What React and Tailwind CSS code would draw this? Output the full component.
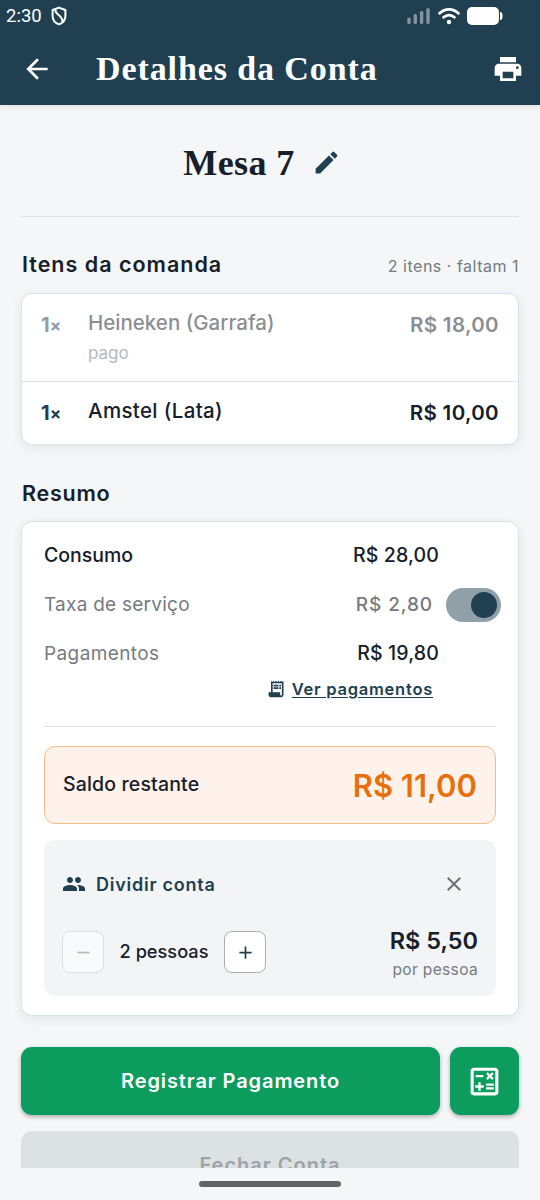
import { useState } from "react";
import {
  MdAdd,
  MdArrowBack,
  MdClose,
  MdEdit,
  MdGroup,
  MdOutlineCalculate,
  MdPrint,
  MdReceiptLong,
  MdRemove,
} from "react-icons/md";

const items = [
  { id: 1, qty: 1, name: "Heineken (Garrafa)", price: "R$ 18,00", paid: true },
  { id: 2, qty: 1, name: "Amstel (Lata)", price: "R$ 10,00", paid: false },
];

function StatusBar() {
  return (
    <div className="flex h-8 items-center pl-[6px] pr-[37px] text-white">
      <span className="font-[Roboto] text-[18.5px] leading-8">2:30</span>
      <svg className="ml-[9px]" width="16" height="20" viewBox="0 0 16 20" fill="none" stroke="currentColor" strokeWidth="2">
        <path d="M8 1.6 14.4 4v6c0 4-2.6 7-6.4 8.4C4.2 17 1.6 14 1.6 10V4z" strokeLinejoin="round" />
        <path d="M4.2 3.2C4 9.5 12 8.5 11.4 16" />
      </svg>
      <svg className="ml-auto" width="24" height="18" viewBox="0 0 24 18" fill="#8194a0">
        <rect x="0.3" y="10.5" width="3.4" height="6.5" rx="1.5" />
        <rect x="6.6" y="7" width="3.4" height="10" rx="1.5" />
        <rect x="12.9" y="4" width="3.4" height="13" rx="1.5" />
        <rect x="19.3" y="1" width="3.4" height="16" rx="1.5" />
      </svg>
      <svg className="ml-[7px]" width="22" height="18" viewBox="0 0 22 18" fill="none" stroke="currentColor" strokeWidth="2.8" strokeLinecap="round">
        <path d="M1.6 6.2C7 1 15 1 20.4 6.2" />
        <path d="M5.6 10.3c3.3-2.9 7.5-2.9 10.8 0" />
        <circle cx="11" cy="15" r="2.2" fill="currentColor" stroke="none" />
      </svg>
      <svg className="ml-[7px]" width="36" height="18" viewBox="0 0 36 18" fill="currentColor">
        <rect x="0" y="0" width="32" height="18" rx="5" />
        <path d="M33 5c2 0 2.5 1 2.5 4s-.5 4-2.5 4z" />
      </svg>
    </div>
  );
}

function Header() {
  return (
    <header className="z-10 h-[105px] shrink-0 bg-[#204052] shadow-[0_2px_6px_rgba(0,0,0,0.08)]">
      <StatusBar />
      <div className="flex h-[73px] items-center pl-[21px] pr-4 text-white">
        <MdArrowBack size={32} />
        <h1 className="ml-[43px] flex-1 whitespace-nowrap font-['Liberation_Serif'] text-[34px] font-bold leading-none tracking-[0.9px]">
          Detalhes da Conta
        </h1>
        <MdPrint size={32} />
      </div>
    </header>
  );
}

function ItemRow({ item }) {
  return (
    <li className="flex items-start border-b border-[#dde3e6] px-[19px] last:border-b-0">
      <div
        className={
          item.paid
            ? "flex h-[87px] flex-1 items-start pt-[15px] opacity-50"
            : "flex h-[62px] flex-1 items-start pt-[15px] tracking-[0.35px]"
        }
      >
        <span className="mt-[2px] w-[47px] text-[20px] font-bold leading-7 tracking-[0px] text-[#204052]">
          {item.qty}
          <span className="text-[17px]">×</span>
        </span>
        <div className="flex-1">
          <p className="text-[20.5px] font-medium leading-7">{item.name}</p>
          {item.paid && (
            <p className="mt-1 text-[17px] leading-6 text-[#6c757a]">pago</p>
          )}
        </div>
        <span className="mt-[2px] text-[20.5px] font-semibold leading-7 tracking-[0.35px]">
          {item.price}
        </span>
      </div>
    </li>
  );
}

function Items() {
  return (
    <section>
      <div className="flex h-[76px] items-center justify-between pl-px pt-[18px]">
        <h3 className="text-[21.5px] font-semibold leading-7 tracking-[1px]">
          Itens da comanda
        </h3>
        <span className="mt-[3px] text-[16px] leading-6 tracking-[0.5px] text-[#757b80]">
          2 itens · faltam 1
        </span>
      </div>
      <ul className="h-[152px] rounded-[11px] border border-[#dbe2e5] bg-white shadow-[0_3px_12px_rgba(32,64,82,0.08)]">
        {items.map((item) => (
          <ItemRow key={item.id} item={item} />
        ))}
      </ul>
    </section>
  );
}

function ServiceSwitch({ on, onToggle }) {
  return (
    <button
      role="switch"
      aria-checked={on}
      onClick={onToggle}
      className={
        on
          ? "flex h-[34px] w-[55px] items-center justify-end rounded-full bg-[#8fa0a8] px-1"
          : "flex h-[34px] w-[55px] items-center justify-start rounded-full bg-[#8fa0a8] px-1"
      }
    >
      <span className="size-[26px] rounded-full bg-[#204052]" />
    </button>
  );
}

function SplitBill() {
  const [people, setPeople] = useState(2);
  const share = (11 / people).toFixed(2).replace(".", ",");

  return (
    <div className="mt-4 h-[156px] rounded-[11px] bg-[#f2f4f5] px-[18px] pt-[29px]">
      <div className="flex h-[30px] items-center text-[#204052]">
        <MdGroup size={24} />
        <span className="ml-[10px] flex-1 text-[18px] font-semibold tracking-[0.75px]">
          Dividir conta
        </span>
        <MdClose size={24} className="mr-[12px] text-[#6c7276]" />
      </div>
      <div className="mt-8 flex h-[42px] items-center">
        <button
          disabled={people <= 2}
          onClick={() => setPeople(people - 1)}
          className="flex size-[42px] items-center justify-center rounded-lg border border-[#a9afb3] bg-white text-[#204052] disabled:border-[#dcdfe1] disabled:bg-[#f9fafb] disabled:text-[#b9bdc0]"
        >
          <MdRemove size={21} />
        </button>
        <span className="w-[120px] text-center text-[18.2px] font-medium">
          {people} pessoas
        </span>
        <button
          onClick={() => setPeople(people + 1)}
          className="flex size-[42px] items-center justify-center rounded-lg border border-[#a9afb3] bg-white text-[#204052]"
        >
          <MdAdd size={21} />
        </button>
        <div className="ml-auto mt-1 text-right">
          <p className="text-[23.5px] font-semibold leading-[30px]">R$ {share}</p>
          <p className="text-[15.5px] leading-[27px] tracking-[0.35px] text-[#757b80]">
            por pessoa
          </p>
        </div>
      </div>
    </div>
  );
}

function Summary() {
  const [fee, setFee] = useState(true);

  return (
    <section>
      <h3 className="mt-[34px] pl-px text-[21.5px] font-semibold leading-7 tracking-[0.75px]">
        Resumo
      </h3>
      <div className="mt-[14px] h-[495px] rounded-[11px] border border-[#dbe2e5] bg-white px-[22px] pt-[8px] shadow-[0_3px_12px_rgba(32,64,82,0.08)]">
        <div className="flex h-[51px] items-center justify-between">
          <span className="text-[19.5px] font-medium">Consumo</span>
          <span className="mr-[57px] text-[19.5px] font-medium tracking-[0.15px]">
            R$ 28,00
          </span>
        </div>
        <div className="-mr-[5px] flex h-[48px] items-center text-[19px] text-[#757b80]">
          <span className="flex-1 tracking-[0.25px]">Taxa de serviço</span>
          <span className="mr-[13px] font-medium tracking-[0.9px]">R$ 2,80</span>
          <ServiceSwitch on={fee} onToggle={() => setFee(!fee)} />
        </div>
        <div className="flex h-[50px] items-center justify-between">
          <span className="text-[19px] tracking-[0.4px] text-[#757b80]">Pagamentos</span>
          <span className="mr-[57px] text-[19.5px] font-medium tracking-[0.15px]">
            R$ 19,80
          </span>
        </div>
        <div className="flex h-[47px] justify-end pr-[63px] text-[#204052]">
          <button className="flex h-[20px] items-center">
            <MdReceiptLong size={20} />
            <span className="ml-[6px] text-[16.5px] font-semibold leading-5 tracking-[0.75px] underline underline-offset-2">
              Ver pagamentos
            </span>
          </button>
        </div>
        <div className="h-px bg-[#dde2e5]" />
        <div className="mt-[19px] flex h-[78px] items-center justify-between rounded-[11px] border border-[#f4bd8b] bg-[#fff2ea] px-[18px]">
          <span className="text-[19.5px] font-medium tracking-[0.15px]">Saldo restante</span>
          <span className="text-[31px] font-semibold leading-none text-[#e96f0c]">
            R$ 11,00
          </span>
        </div>
        <SplitBill />
      </div>
    </section>
  );
}

function Actions() {
  return (
    <div className="mt-[31px]">
      <div className="flex gap-[10px] text-white">
        <button className="h-[68px] flex-1 rounded-[11px] bg-[#0c9c5e] text-[20px] font-semibold tracking-[0.9px] shadow-[0_2px_4px_rgba(0,0,0,0.3)]">
          Registrar Pagamento
        </button>
        <button className="flex h-[68px] w-[69px] items-center justify-center rounded-[11px] bg-[#0c9c5e] shadow-[0_2px_4px_rgba(0,0,0,0.3)]">
          <MdOutlineCalculate size={37} />
        </button>
      </div>
      <button
        disabled
        className="mt-4 h-[68px] w-full rounded-[11px] bg-[#dce1e2] text-[20px] font-semibold tracking-[1px] text-[#9da3a6]"
      >
        Fechar Conta
      </button>
    </div>
  );
}

function App() {
  return (
    <div className="flex h-[1200px] w-[540px] flex-col overflow-hidden bg-[#f4f6f8] font-[Inter,sans-serif] text-[#16202a]">
      <Header />
      <main className="flex-1 overflow-hidden px-[21px]">
        <div className="flex h-[112px] items-center justify-center border-b border-[#dde2e5] pr-4 pt-1">
          <h2 className="font-['Liberation_Serif'] text-[36px] font-bold leading-none tracking-[0.4px]">
            Mesa 7
          </h2>
          <MdEdit size={29} className="ml-[17px] text-[#204052]" />
        </div>
        <Items />
        <Summary />
        <Actions />
      </main>
      <footer className="flex h-8 shrink-0 justify-center pt-[13px]">
        <div className="h-[6px] w-[142px] rounded-full bg-[#626466]" />
      </footer>
    </div>
  );
}

export default App;
